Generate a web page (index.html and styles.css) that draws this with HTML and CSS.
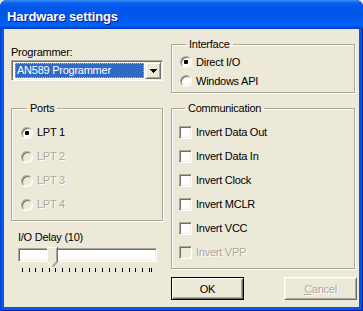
FILE: index.html
```html
<!doctype html>
<html lang="en">
  <head>
    <meta charset="UTF-8" />
    <title>Hardware settings</title>
    <link rel="stylesheet" href="styles.css">
  </head>
  <body>
    <div class="window">
      <div class="titlebar">Hardware settings</div>

      <div class="client">
        <div class="col col-left">
          <div class="field-label">Programmer:</div>
          <div class="combo">
            <span class="combo-value">AN589 Programmer</span>
            <span class="combo-btn">
              <svg width="7" height="4" viewBox="0 0 7 4" shape-rendering="crispEdges">
                <rect x="0" y="0" width="7" height="1" fill="#000" />
                <rect x="1" y="1" width="5" height="1" fill="#000" />
                <rect x="2" y="2" width="3" height="1" fill="#000" />
                <rect x="3" y="3" width="1" height="1" fill="#000" />
              </svg>
            </span>
          </div>

          <fieldset class="group ports">
            <legend>Ports</legend>
            <div class="option"><span class="radio checked"></span>LPT 1</div>
            <div class="option disabled"><span class="radio"></span>LPT 2</div>
            <div class="option disabled"><span class="radio"></span>LPT 3</div>
            <div class="option disabled"><span class="radio"></span>LPT 4</div>
          </fieldset>

          <div class="field-label delay-label">I/O Delay (10)</div>
          <div class="slider">
            <div class="track"></div>
            <svg class="thumb" width="11" height="20" viewBox="0 0 11 20">
              <polygon points="0.5,0.5 10.5,0.5 10.5,15 5.5,19.5 0.5,15" fill="#ECE9D8" />
              <polyline points="0.5,15 0.5,0.5 10,0.5" fill="none" stroke="#fff" />
              <polyline points="0.5,15 5,19.5" fill="none" stroke="#fff" />
              <polyline points="10.5,0 10.5,15 5.5,20" fill="none" stroke="#716F64" />
              <polyline points="9.5,1 9.5,14.5 5.5,18.5" fill="none" stroke="#ACA899" />
            </svg>
          </div>
          <div class="ticks">
            <div class="tick-run">
              <span></span><span></span><span></span><span></span><span></span>
              <span></span><span></span><span></span><span></span><span></span>
              <span></span><span></span><span></span><span></span><span></span>
              <span></span><span></span><span></span><span></span><span></span>
            </div>
            <span class="tick-end"></span>
          </div>
        </div>

        <div class="col col-right">
          <fieldset class="group interface">
            <legend>Interface</legend>
            <div class="option"><span class="radio checked"></span>Direct I/O</div>
            <div class="option"><span class="radio"></span>Windows API</div>
          </fieldset>

          <fieldset class="group comm">
            <legend>Communication</legend>
            <div class="option"><span class="check"></span>Invert Data Out</div>
            <div class="option"><span class="check"></span>Invert Data In</div>
            <div class="option"><span class="check"></span>Invert Clock</div>
            <div class="option"><span class="check"></span>Invert MCLR</div>
            <div class="option"><span class="check"></span>Invert VCC</div>
            <div class="option disabled"><span class="check"></span>Invert VPP</div>
          </fieldset>

          <div class="buttons">
            <button class="btn default">OK</button>
            <button class="btn" disabled><u>C</u>ancel</button>
          </div>
        </div>
      </div>
    </div>
  </body>
</html>
```

FILE: styles.css
```css
* {
  margin: 0;
  padding: 0;
  box-sizing: border-box;
}

body {
  background: #ECE9D8;
  font-family: "Liberation Sans", Arial, sans-serif;
  font-size: 11px;
  letter-spacing: -0.25px;
  color: #000;
}

.window {
  width: 363px;
  height: 311px;
  display: flex;
  flex-direction: column;
  padding: 0 4px 4px;
  background: #0058EE;
  border-radius: 7px 7px 0 0;
  box-shadow: inset 1px 0 #0843D0, inset -1px 0 #001DA0, inset 0 -1px #001DA0;
}

.titlebar {
  margin: 0 -4px;
  height: 29px;
  padding: 9px 0 0 7px;
  border-radius: 7px 7px 0 0;
  background: linear-gradient(to bottom, #3D8FF5 0, #0A62F0 3px, #0058EE 6px, #0055E5 14px, #005EF5 22px, #0062F8 25px, #0046D3 28px, #003CB8 29px);
  color: #fff;
  font-size: 13px;
  font-weight: bold;
  letter-spacing: -0.1px;
  line-height: 15px;
  text-shadow: 1px 1px #0A1883;
}

.client {
  flex: 1;
  display: flex;
  gap: 8px;
  padding-left: 7px;
  background: #ECE9D8;
}

.col-left {
  width: 152px;
}

.col-right {
  width: 187px;
}

.field-label {
  line-height: 13px;
  margin-top: 17px;
}

/* combo box */
.combo {
  display: flex;
  height: 21px;
  margin-top: 1px;
  padding: 1px 0 1px 1px;
  background: #fff;
  border: 1px solid;
  border-color: #ACA899 #fff #fff #ACA899;
  box-shadow: inset 1px 1px #716F64, inset -1px -1px #F1EFE2;
}

.combo-value {
  flex: 1;
  margin: 1px 1px 0 2px;
  height: 15px;
  line-height: 13px;
  padding-left: 1px;
  background: #316AC5;
  color: #fff;
  border: 1px dotted #D8B560;
}

.combo-btn {
  width: 16px;
  height: 17px;
  margin-right: 1px;
  display: flex;
  align-items: center;
  justify-content: center;
  background: #ECE9D8;
  border: 1px solid;
  border-color: #F1EFE2 #716F64 #716F64 #F1EFE2;
  box-shadow: inset 1px 1px #fff, inset -1px -1px #ACA899;
}

/* group boxes */
.group {
  min-inline-size: 0;
  border: 1px solid #ACA899;
  border-radius: 0;
  box-shadow: inset 1px 1px #fff, 1px 1px #fff;
}

.group legend {
  margin-left: 6px;
  padding: 0 3px;
  line-height: 13px;
}

.ports {
  width: 152px;
  margin-top: 21px;
  padding: 6px 0 3px 9px;
}

.interface {
  width: 184px;
  margin-top: 9px;
  padding: 2px 0 1px 8px;
}

.comm {
  width: 184px;
  margin-top: 9px;
  padding: 6px 0 3px 7px;
}

.option {
  display: flex;
  align-items: flex-start;
  height: 24px;
  line-height: 13px;
  padding-top: 5px;
}

.interface .option {
  height: 19px;
  padding-top: 3px;
}

.option.disabled {
  color: #ACA899;
  text-shadow: 1px 1px #fff;
}

.radio {
  position: relative;
  width: 12px;
  height: 12px;
  margin: 1px 4px 0 0;
  border-radius: 50%;
  background: #fff;
  border: 1px solid;
  border-color: #ACA899 #fff #fff #ACA899;
  box-shadow: inset 1px 1px #716F64, inset -1px -1px #F1EFE2;
}

.interface .radio {
  margin-top: 0;
}

.radio.checked::after {
  content: "";
  position: absolute;
  left: 3px;
  top: 3px;
  width: 4px;
  height: 4px;
  border-radius: 1px;
  background: #000;
}

.check {
  width: 13px;
  height: 13px;
  margin-right: 4px;
  background: #fff;
  border: 1px solid;
  border-color: #ACA899 #fff #fff #ACA899;
  box-shadow: inset 1px 1px #716F64, inset -1px -1px #F1EFE2;
}

.disabled .radio,
.disabled .check {
  background: #ECE9D8;
}

/* slider */
.delay-label {
  margin: 10px 0 0 7px;
}

.slider {
  position: relative;
  width: 139px;
  height: 14px;
  margin: 4px 0 0 7px;
}

.track {
  height: 14px;
  background: #fff;
  border: 1px solid;
  border-color: #ACA899 #fff #fff #ACA899;
  box-shadow: inset 1px 1px #716F64, inset -1px -1px #F1EFE2;
}

.thumb {
  position: absolute;
  left: 29px;
  top: -1px;
}

.ticks {
  display: flex;
  margin: 6px 0 0 11px;
}

.tick-run {
  width: 128px;
  display: flex;
  justify-content: space-between;
}

.ticks span {
  width: 1px;
  height: 4px;
  background: #000;
}

.ticks .tick-end {
  margin-left: 1px;
}

/* buttons */
.buttons {
  display: flex;
  justify-content: space-between;
  width: 186px;
  margin-top: 8px;
}

.btn {
  width: 73px;
  height: 23px;
  font-family: inherit;
  font-size: 11px;
  letter-spacing: -0.25px;
  color: #000;
  background: #ECE9D8;
  border: 1px solid;
  border-color: #fff #716F64 #716F64 #fff;
  box-shadow: inset 1px 1px #F1EFE2, inset -1px -1px #ACA899;
}

.btn.default {
  border-color: #000;
  box-shadow: inset 1px 1px #fff, inset -1px -1px #716F64, inset -2px -2px #ACA899;
}

.btn:disabled {
  color: #ACA899;
  text-shadow: 1px 1px #fff;
}
```
